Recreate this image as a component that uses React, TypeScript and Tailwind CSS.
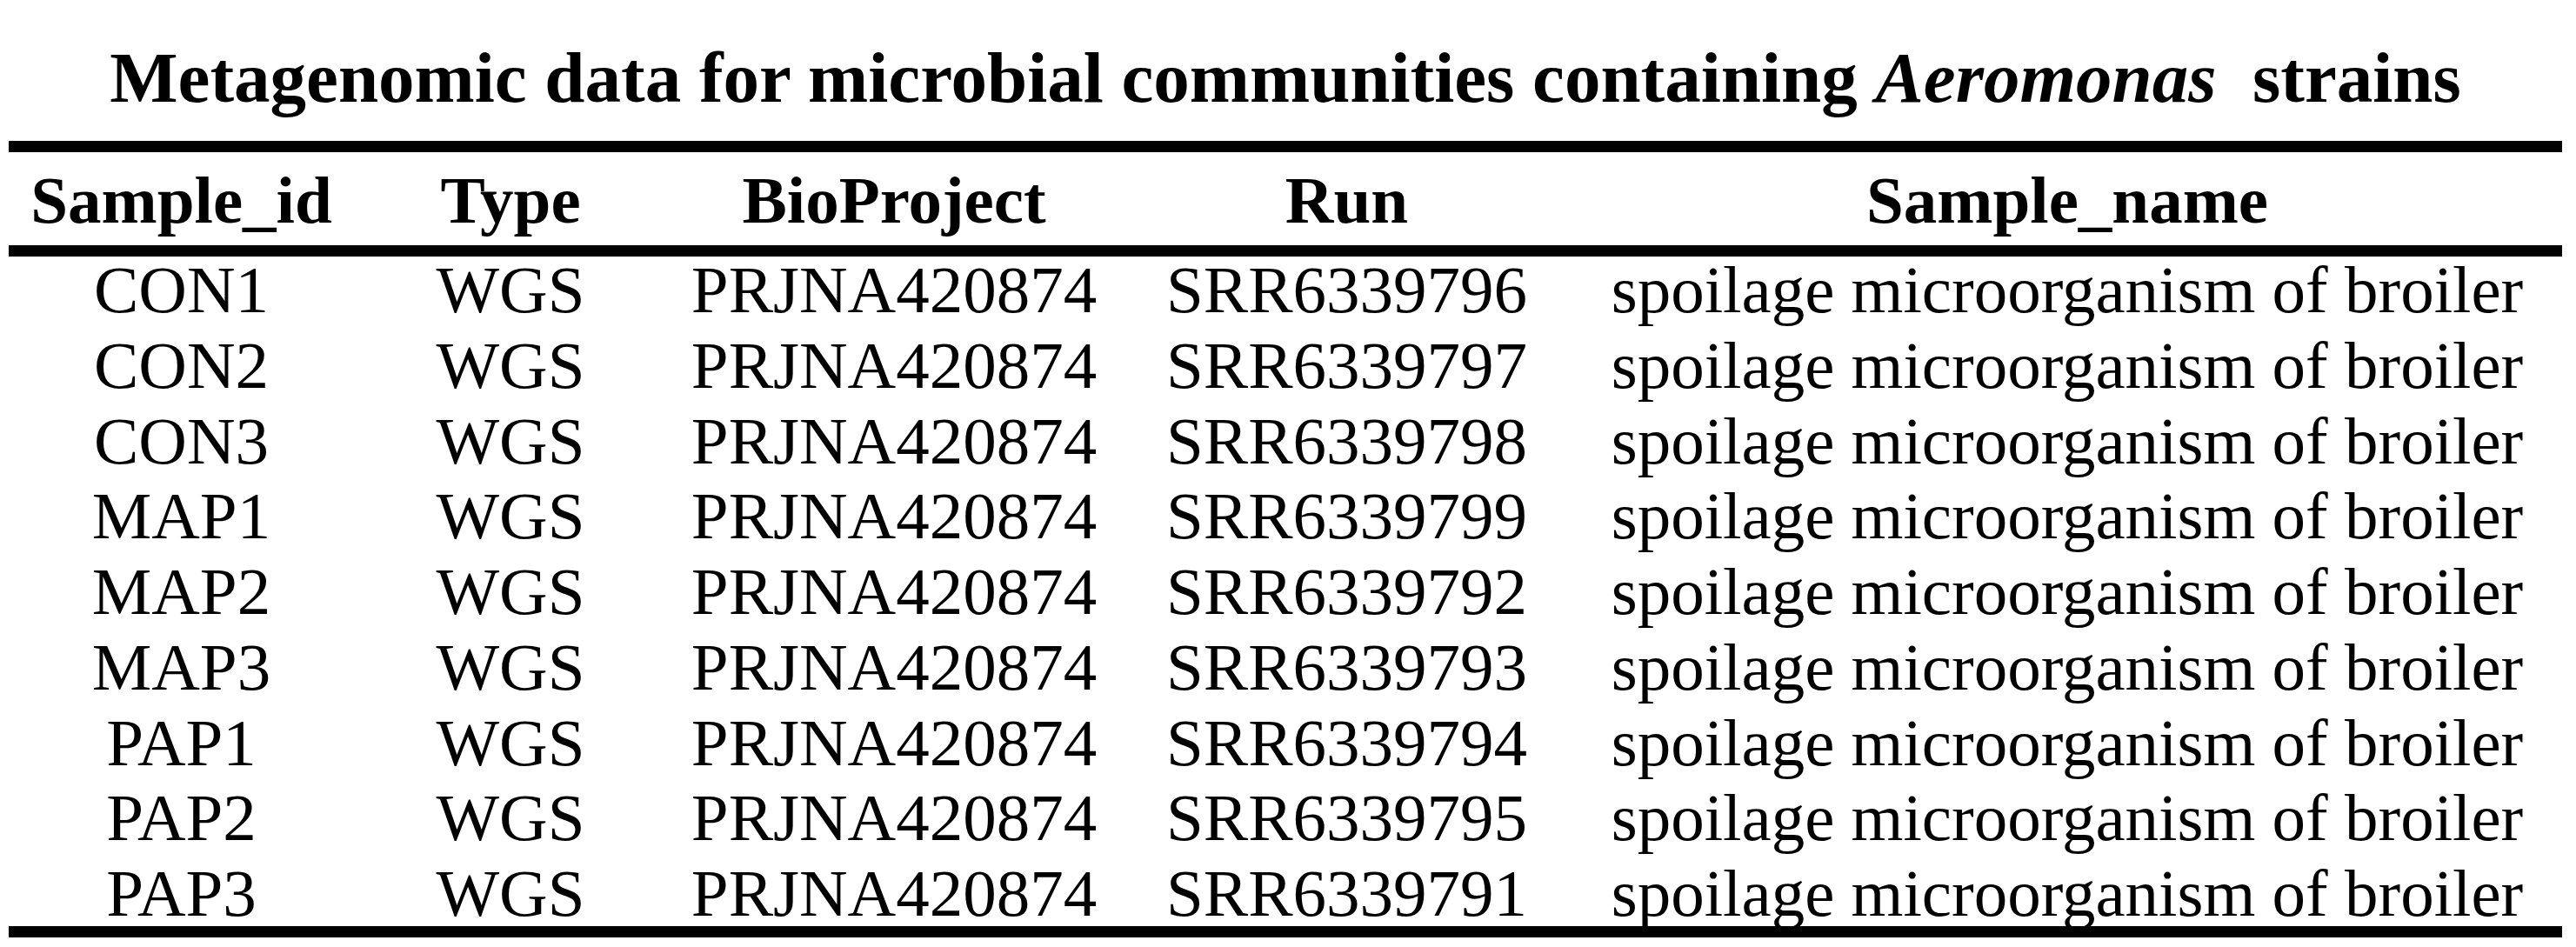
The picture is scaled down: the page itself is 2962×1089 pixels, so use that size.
const columns = ["Sample_id", "Type", "BioProject", "Run", "Sample_name"];

const rows = [
  ["CON1", "WGS", "PRJNA420874", "SRR6339796"],
  ["CON2", "WGS", "PRJNA420874", "SRR6339797"],
  ["CON3", "WGS", "PRJNA420874", "SRR6339798"],
  ["MAP1", "WGS", "PRJNA420874", "SRR6339799"],
  ["MAP2", "WGS", "PRJNA420874", "SRR6339792"],
  ["MAP3", "WGS", "PRJNA420874", "SRR6339793"],
  ["PAP1", "WGS", "PRJNA420874", "SRR6339794"],
  ["PAP2", "WGS", "PRJNA420874", "SRR6339795"],
  ["PAP3", "WGS", "PRJNA420874", "SRR6339791"],
];

const grid = "grid grid-cols-[397px_360px_522px_519px_1138px] text-center";

export default function App() {
  return (
    <div className="h-[1089px] w-[2962px] bg-white text-black font-['Liberation_Serif','Times_New_Roman',serif]">
      <div className="ml-[10px] w-[2936px]">
        {/* caption */}
        <h1 className="pt-[47.5px] text-center text-[83px] font-bold leading-[83px] whitespace-pre">
          Metagenomic data for microbial communities containing <i>Aeromonas</i>  strains
        </h1>

        <div className="mt-[31.5px] h-[13px] bg-black" />

        {/* header */}
        <div className={`${grid} pt-[4px] text-[77px] font-bold leading-[103px]`}>
          {columns.map((c) => (
            <div key={c}>{c}</div>
          ))}
        </div>

        <div className="h-[13px] bg-black" />

        {/* body */}
        <div className="flex flex-col gap-[10.75px] text-[77px] leading-[76px]">
          {rows.map((r) => (
            <div key={r[0]} className={grid}>
              {r.map((cell, i) => (
                <div key={i}>{cell}</div>
              ))}
              <div>spoilage microorganism of broiler</div>
            </div>
          ))}
        </div>

        <div className="h-[13px] bg-black" />
      </div>
    </div>
  );
}
